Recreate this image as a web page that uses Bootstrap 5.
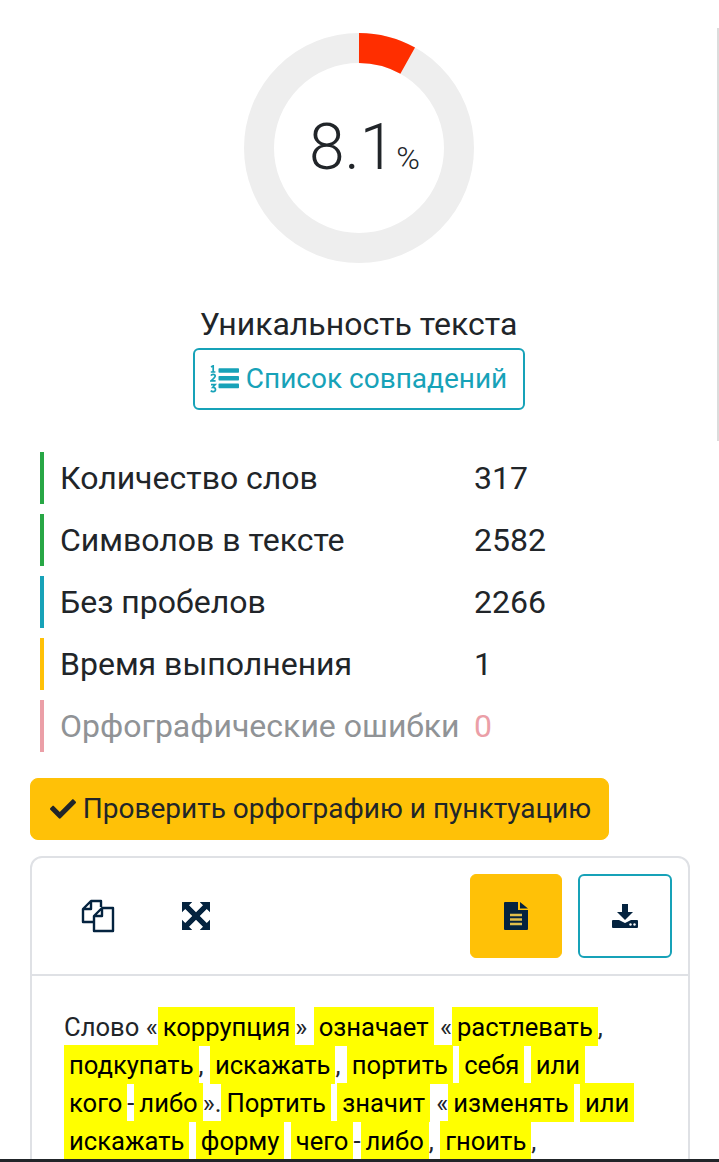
<!doctype html>
<html lang="ru">
<head>
<meta charset="utf-8">
<link rel="stylesheet" href="https://cdn.jsdelivr.net/npm/bootstrap@5.3.0/dist/css/bootstrap.min.css">
<style>
html,body{height:1162px;overflow:hidden}
body{font-family:Roboto,"Liberation Sans",sans-serif;font-size:32px;line-height:1.2;color:#212529;background:#fff;position:relative}
.top-col{padding-right:2px}
.ring-box{width:230px;height:230px;margin-top:33px}
.ring-text{padding-left:12px}
.ring-num{font-size:64px;line-height:1;font-weight:300}
.ring-pct{font-size:32px;font-weight:300;margin-left:1px}
.ring-label{margin-top:37px;line-height:48px}
.list-btn{font-size:28px;line-height:36px;border:2px solid #17a2b8;color:#17a2b8;border-radius:6px;width:332px;height:62px;padding:0;gap:7px}
.stat-list{margin:42px 0 0 40px;gap:10px}
.stat-row{height:52px;border-left:4px solid #28a745;padding-left:16px;font-size:32px}
.stat-name{width:414px;white-space:nowrap}
.bar-blue{border-left-color:#17a2b8}
.bar-yellow{border-left-color:#ffc107}
.bar-pink{border-left-color:#eb9fa7}
.dim{color:#909396}
.zero{color:#eb9fa7}
.spell-btn{margin:26px 0 0 30px;width:579px;height:62px;background:#ffc107;border-color:#ffc107;color:#212529;font-size:28px;border-radius:8px;padding:0 0 0 2px;gap:7px}
.text-card{margin:16px 29px 0 30px;border:2px solid #dfe1e5;border-radius:12px;height:360px}
.card-top{height:118px;border-bottom:2px solid #dfe1e5;padding:16px 16px 0 0;flex:none}
.tool{width:92px;height:84px;padding:0;border-radius:6px}
.tool-plain{border:0;background:none;width:82px}
.tool-yellow{background:#ffc107;border-color:#ffc107}
.tool-out{border:2px solid #17a2b8;background:#fff;width:94px}
.first-tool{margin-left:25px}
.body-copy{padding:32px 30px 0 32px;font-size:25.6px;line-height:38px;color:#212529}
.hl{background:#ff0;color:#000;padding:5px 5px 4px}
.scroll-line{position:absolute;right:0;top:28px;width:2px;height:413px;background:#dcdcdc}
.bottom-bar{position:absolute;left:0;right:0;bottom:0;height:3px;background:#212529}
</style>
</head>
<body>
<div class="top-col d-flex flex-column align-items-center">
  <div class="ring-box position-relative d-flex align-items-center justify-content-center">
    <svg class="position-absolute top-0 start-0" width="230" height="230" viewBox="0 0 230 230" role="img" aria-label="8.1%">
      <circle cx="115" cy="115" r="100" fill="none" stroke="#eeeeee" stroke-width="30"/>
      <path d="M115 15A100 100 0 0 1 163.7 27.7" fill="none" stroke="#ff2e00" stroke-width="30"/>
    </svg>
    <div class="ring-text position-relative"><span class="ring-num">8.1</span><span class="ring-pct">%</span></div>
  </div>
  <div class="ring-label">Уникальность текста</div>
  <button type="button" class="btn list-btn d-flex align-items-center justify-content-center">
    <svg width="29" height="28" viewBox="0 0 29 28" aria-hidden="true"><g fill="#17a2b8"><rect x="8.500" y="3.200" width="20.500" height="4.600" rx=".8"/><rect x="8.500" y="11" width="20.500" height="4.600" rx=".8"/><rect x="8.500" y="18.600" width="20.500" height="4.600" rx=".8"/></g><path d="M1 2 3.200 .8V7M.8 7H5.400M1 10.700Q1.600 9.300 3.100 9.300 5.200 9.300 5.200 11 5.200 12.300 1 15.800H5.600M1 19.600H5.200L2.800 22.300Q5.500 22.300 5.500 24.500 5.500 26.600 3.100 26.600 1.600 26.600.8 25.600" fill="none" stroke="#17a2b8" stroke-width="1.700"/></svg>
    <span>Список совпадений</span>
  </button>
</div>

<div class="stat-list d-flex flex-column">
  <div class="stat-row d-flex align-items-center"><div class="stat-name">Количество слов</div><div>317</div></div>
  <div class="stat-row d-flex align-items-center"><div class="stat-name">Символов в тексте</div><div>2582</div></div>
  <div class="stat-row bar-blue d-flex align-items-center"><div class="stat-name">Без пробелов</div><div>2266</div></div>
  <div class="stat-row bar-yellow d-flex align-items-center"><div class="stat-name">Время выполнения</div><div>1</div></div>
  <div class="stat-row bar-pink d-flex align-items-center"><div class="stat-name dim">Орфографические ошибки</div><div class="zero">0</div></div>
</div>

<button type="button" class="btn spell-btn d-flex align-items-center justify-content-center">
  <svg width="26" height="26" viewBox="0 0 512 512" fill="#212529" aria-hidden="true"><path d="M173.898 439.404l-166.4-166.4c-9.997-9.997-9.997-26.206 0-36.204l36.203-36.204c9.997-9.998 26.207-9.998 36.204 0L192 312.69 432.095 72.596c9.997-9.997 26.207-9.997 36.204 0l36.203 36.204c9.997 9.997 9.997 26.206 0 36.204l-294.4 294.401c-9.998 9.997-26.207 9.997-36.204-.001z"/></svg>
  <span>Проверить орфографию и пунктуацию</span>
</button>

<div class="text-card overflow-hidden d-flex flex-column">
  <div class="card-top d-flex gap-3">
    <button type="button" class="btn tool tool-plain first-tool d-flex align-items-center justify-content-center" aria-label="Копировать">
      <svg width="34" height="34" viewBox="0 0 34 34" fill="none" stroke="#04233f" stroke-width="2.400" stroke-linejoin="round" aria-hidden="true"><path d="M20 8V2H10L2 10v13h10M10 2v8H2"/><path d="M21 9h11v23H13V17zM21 9v8h-8"/></svg>
    </button>
    <button type="button" class="btn tool tool-plain d-flex align-items-center justify-content-center" aria-label="Развернуть">
      <svg width="28" height="30" viewBox="0 0 30 30" fill="#04233f" aria-hidden="true"><path d="M0 0h11L7.500 3.500 15 11l7.500-7.500L19 0h11v11l-3.500-3.500L19 15l7.500 7.500L30 19v11H19l3.500-3.500L15 19l-7.500 7.500L11 30H0V19l3.500 3.500L11 15 3.500 7.500 0 11z"/></svg>
    </button>
    <div class="flex-grow-1"></div>
    <button type="button" class="btn tool tool-yellow d-flex align-items-center justify-content-center" aria-label="Текст">
      <svg width="24" height="28" viewBox="0 0 24 28" aria-hidden="true"><path d="M1 0h13v8h10v19a1 1 0 0 1-1 1H1a1 1 0 0 1-1-1V1a1 1 0 0 1 1-1zM16 0l8 6.500h-8z" fill="#04233f"/><path d="M6 13h12M6 17.500h12M6 22h12" stroke="#e0bf4b" stroke-width="2.300"/></svg>
    </button>
    <button type="button" class="btn tool tool-out d-flex align-items-center justify-content-center" aria-label="Скачать">
      <svg width="26" height="24" viewBox="0 0 26 24" aria-hidden="true"><path d="M10 0h6v8h5l-8 8-8-8h5z" fill="#04233f"/><path d="M1 16h6l6 3 6-3h6a1 1 0 0 1 1 1v6a1 1 0 0 1-1 1H1a1 1 0 0 1-1-1v-6a1 1 0 0 1 1-1z" fill="#04233f"/><circle cx="18.500" cy="20.500" r="1.200" fill="#fff"/><circle cx="22.500" cy="20.500" r="1.200" fill="#fff"/></svg>
    </button>
  </div>
  <div class="body-copy">Слово «<span class="hl">коррупция</span>» <span class="hl">означает</span> «<span class="hl">растлевать</span>, <span class="hl">подкупать</span>, <span class="hl">искажать</span>, <span class="hl">портить</span> <span class="hl">себя</span> <span class="hl">или</span> <span class="hl">кого</span>-<span class="hl">либо</span>».<span class="hl">Портить</span> <span class="hl">значит</span> «<span class="hl">изменять</span> <span class="hl">или</span> <span class="hl">искажать</span> <span class="hl">форму</span> <span class="hl">чего</span>-<span class="hl">либо</span>, <span class="hl">гноить</span>,</div>
</div>
<div class="scroll-line"></div>
<div class="bottom-bar"></div>
<script src="https://cdn.jsdelivr.net/npm/bootstrap@5.3.0/dist/js/bootstrap.bundle.min.js"></script>
</body>
</html>
